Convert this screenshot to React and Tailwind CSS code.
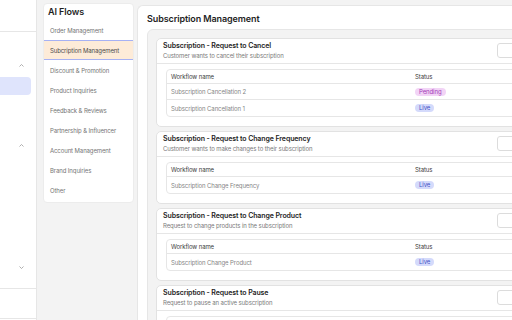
import { useState } from "react";

const flows = [
  "Order Management",
  "Subcription Management",
  "Discount & Promotion",
  "Product Inquiries",
  "Feedback & Reviews",
  "Partnership & Influencer",
  "Account Management",
  "Brand Inquiries",
  "Other",
];

const intents = [
  {
    title: "Subscription - Request to Cancel",
    desc: "Customer wants to cancel their subscription",
    rows: [
      { name: "Subscription Cancellation 2", status: "Pending" },
      { name: "Subscription Cancellation 1", status: "Live" },
    ],
  },
  {
    title: "Subscription - Request to Change Frequency",
    desc: "Customer wants to make changes to their subscription",
    rows: [{ name: "Subscription Change Frequency", status: "Live" }],
  },
  {
    title: "Subscription - Request to Change Product",
    desc: "Request to change products in the subscription",
    rows: [{ name: "Subscription Change Product", status: "Live" }],
  },
  {
    title: "Subscription - Request to Pause",
    desc: "Request to pause an active subscription",
    rows: [{ name: "Subscription Pause", status: "Live" }],
  },
];

function Chevron({ down }) {
  return (
    <svg width="5" height="3" viewBox="0 0 5 3" className="text-[#9a9a9a]">
      <polyline
        points={down ? "0.5,0.5 2.5,2.5 4.5,0.5" : "0.5,2.5 2.5,0.5 4.5,2.5"}
        fill="none"
        stroke="currentColor"
        strokeWidth="0.8"
      />
    </svg>
  );
}

function StatusBadge({ status }) {
  if (status === "Pending") {
    return (
      <span className="inline-flex items-center h-[8px] px-[4px] rounded-full bg-[#f2d4f6] text-[#a23db6] text-[6px] leading-none">
        Pending
      </span>
    );
  }
  return (
    <span className="inline-flex items-center h-[8px] px-[4px] rounded-full bg-[#d4dafb] text-[#4552c6] text-[6px] leading-none">
      Live
    </span>
  );
}

function IntentCard({ intent }) {
  return (
    <div className="bg-white border border-[#e2e2e2] rounded-[5px]">
      {/* card header */}
      <div className="flex items-center justify-between px-[6px] pt-[2px] pb-[3px] border-b border-[#e6e6e6]">
        <div>
          <div className="text-[7px] leading-[10px] font-semibold tracking-[-0.1px] text-[#1e1e1e]">
            {intent.title}
          </div>
          <div className="text-[6px] leading-[9px] tracking-[-0.1px] text-[#7a7a7a]">
            {intent.desc}
          </div>
        </div>
        <div className="w-[34px] h-[15px] rounded-[3px] border border-[#dcdcdc] bg-white" />
      </div>
      {/* workflows table */}
      <div className="px-[9px] pt-[5px] pb-[9px]">
        <div className="border border-[#e6e6e6] rounded-[4px] divide-y divide-[#e6e6e6] text-[6px] tracking-[-0.1px]">
          <div className="flex items-center h-[14px] text-[#3a3a3a]">
            <div className="w-[248px] pl-[4px]">Workflow name</div>
            <div>Status</div>
          </div>
          {intent.rows.map((row) => (
            <div
              key={row.name}
              className="flex items-center h-[16px] text-[#858585]"
            >
              <div className="w-[248px] pl-[4px]">{row.name}</div>
              <StatusBadge status={row.status} />
            </div>
          ))}
        </div>
      </div>
    </div>
  );
}

export default function App() {
  const [active, setActive] = useState(1);

  return (
    <div className="w-[512px] h-[320px] overflow-hidden flex bg-[#f3f3f3] font-['Inter',sans-serif]">
      {/* collapsed nav */}
      <aside className="w-[37px] shrink-0 bg-white border-r border-[#e6e6e6] flex flex-col">
        <div className="h-[32px] shrink-0 border-b border-[#e6e6e6]" />
        <div className="mt-[25px] h-[16px] flex items-center justify-end pr-[12px]">
          <Chevron />
        </div>
        <div className="mt-[4px] h-[18px] w-[31px] rounded-r-[4px] bg-[#dfe4fc]" />
        <div className="mt-[42px] h-[16px] flex items-center justify-end pr-[12px]">
          <Chevron />
        </div>
        <div className="mt-[106px] h-[16px] flex items-center justify-end pr-[12px]">
          <Chevron down />
        </div>
        <div className="mt-[13px] h-[31px] shrink-0 border-y border-[#e6e6e6]" />
      </aside>

      {/* AI flows list */}
      <div className="w-[100px] shrink-0 pl-[6px] pt-[3px]">
        <div className="w-[91px] bg-white rounded-[4px] border border-[#ececec] pb-[2px]">
          <div className="h-[16px] flex items-center pl-[4px] text-[9px] font-semibold tracking-[-0.1px] text-[#1e1e1e]">
            AI Flows
          </div>
          {flows.map((flow, i) => (
            <div
              key={flow}
              onClick={() => setActive(i)}
              className={
                i === active
                  ? "h-[20px] flex items-center pl-[6px] text-[6px] tracking-[-0.1px] text-[#4a4a4a] bg-[#fdebd8] border-y border-[#a6b1f4] cursor-pointer"
                  : "h-[20px] flex items-center pl-[6px] text-[6px] tracking-[-0.1px] text-[#757575] cursor-pointer"
              }
            >
              {flow}
            </div>
          ))}
        </div>
      </div>

      {/* main */}
      <main className="flex-1 min-w-0 mt-[5px] bg-white rounded-tl-[6px] border-l border-t border-[#e6e6e6] overflow-hidden pl-[9px] pt-[6px]">
        <h1 className="text-[9px] leading-[13px] font-semibold tracking-[-0.1px] text-[#1e1e1e]">
          Subscription Management
        </h1>
        <div className="mt-[4px] w-[400px] bg-[#f3f3f3] border border-[#e6e6e6] rounded-[6px] p-[8px] flex flex-col gap-[4px]">
          {intents.map((intent) => (
            <IntentCard key={intent.title} intent={intent} />
          ))}
        </div>
      </main>
    </div>
  );
}
